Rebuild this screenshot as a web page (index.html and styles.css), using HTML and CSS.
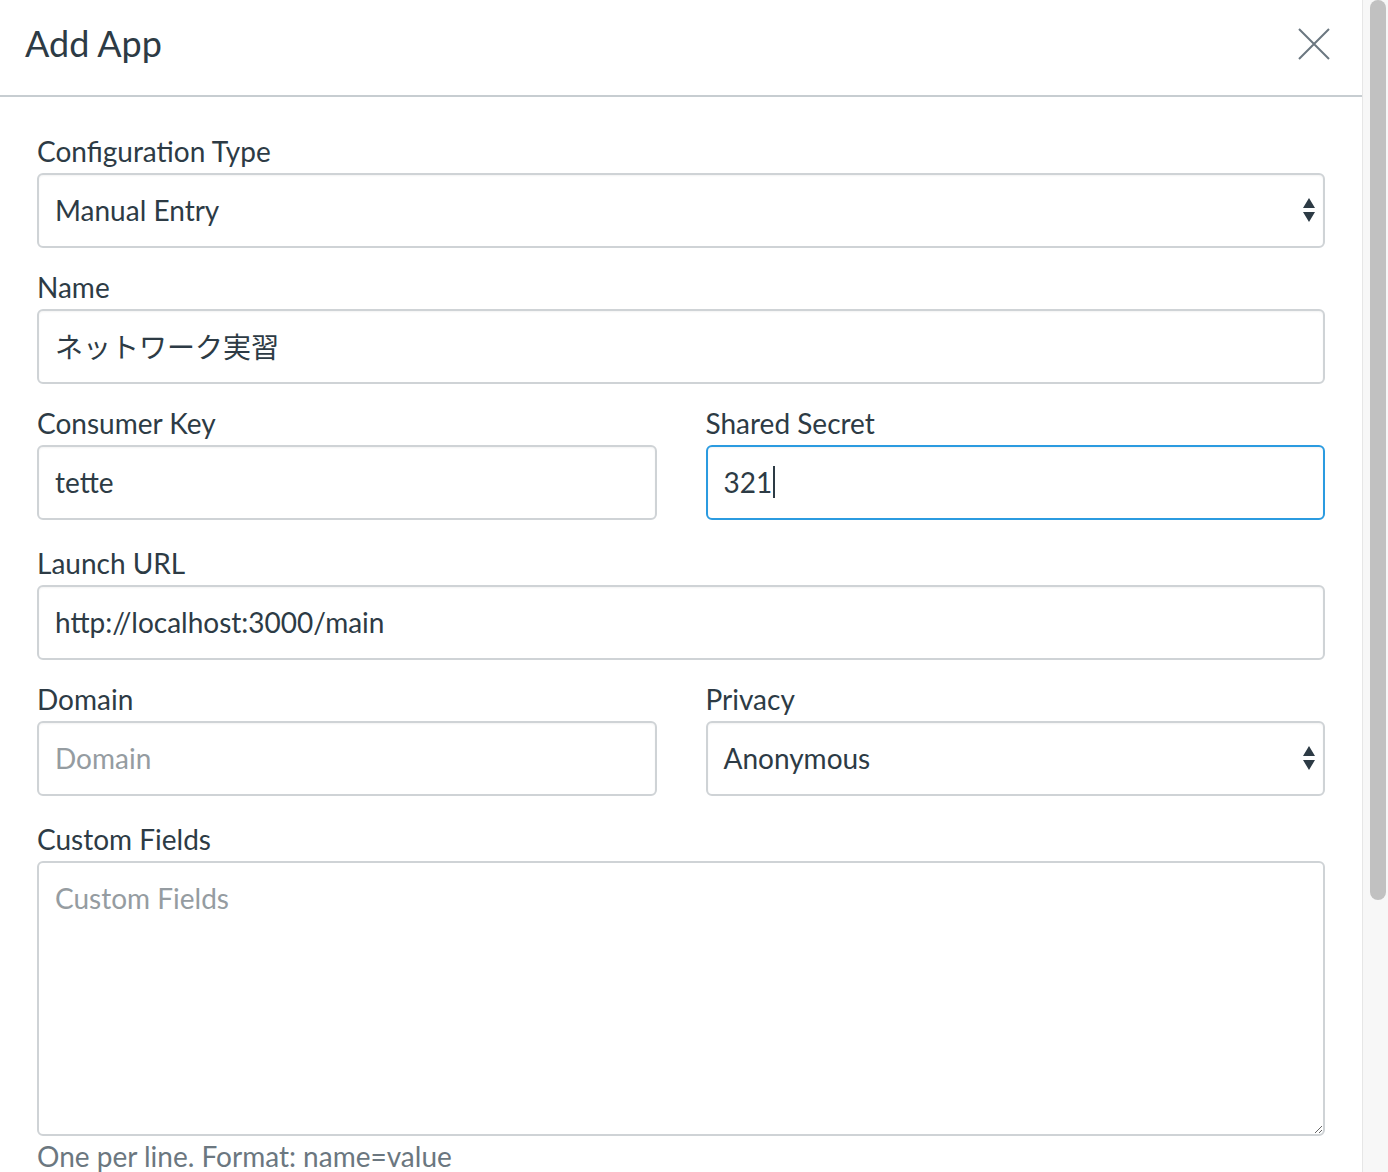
FILE: index.html
```html
<!DOCTYPE html>
<html lang="en">
<head>
<meta charset="utf-8">
<title>Add App</title>
<link rel="stylesheet" href="styles.css">
</head>
<body>
<div class="page">
  <div class="modal">
    <header class="modal-header">
      <h1 class="modal-title">Add App</h1>
      <button class="close" aria-label="Close">
        <svg width="32" height="32" viewBox="0 0 32 32"><path d="M1 1 L31 31 M31 1 L1 31" stroke="#6b7780" stroke-width="2" fill="none"/></svg>
      </button>
    </header>
    <div class="modal-body">
      <div class="field">
        <label class="label">Configuration Type</label>
        <div class="control select">
          <span class="value">Manual Entry</span>
          <svg class="arrows" width="14" height="26" viewBox="0 0 14 26"><path d="M7 1 L13 11 L1 11 Z M1 15 L13 15 L7 25 Z" fill="#2d3b45"/></svg>
        </div>
      </div>
      <div class="field">
        <label class="label">Name</label>
        <div class="control"><span class="value cjk">ネットワーク実習</span></div>
      </div>
      <div class="row">
        <div class="field">
          <label class="label">Consumer Key</label>
          <div class="control"><span class="value">tette</span></div>
        </div>
        <div class="field">
          <label class="label">Shared Secret</label>
          <div class="control focused"><span class="value">321</span><span class="caret"></span></div>
        </div>
      </div>
      <div class="field">
        <label class="label">Launch URL</label>
        <div class="control"><span class="value">http://localhost:3000/main</span></div>
      </div>
      <div class="row">
        <div class="field">
          <label class="label">Domain</label>
          <div class="control"><span class="value placeholder">Domain</span></div>
        </div>
        <div class="field">
          <label class="label">Privacy</label>
          <div class="control select">
            <span class="value">Anonymous</span>
            <svg class="arrows" width="14" height="26" viewBox="0 0 14 26"><path d="M7 1 L13 11 L1 11 Z M1 15 L13 15 L7 25 Z" fill="#2d3b45"/></svg>
          </div>
        </div>
      </div>
      <div class="field last">
        <label class="label">Custom Fields</label>
        <textarea class="textarea" placeholder="Custom Fields"></textarea>
        <p class="help">One per line. Format: name=value</p>
      </div>
    </div>
  </div>
  <div class="scrollbar"><div class="thumb"></div></div>
</div>
</body>
</html>
```
FILE: styles.css
```css
* { box-sizing: border-box; }
html, body { margin: 0; padding: 0; height: 100%; overflow: hidden; background: #fff; }
body { font-family: Lato, "Noto Sans CJK JP", sans-serif; color: #2d3b45; }
.page { display: flex; height: 1172px; }
.modal { flex: 1; min-width: 0; }
.modal-header {
  height: 97px;
  border-bottom: 2px solid #c7cdd1;
  display: flex; align-items: center; justify-content: space-between;
  padding: 0 32px 0 25px;
}
.modal-title { margin: 0; font-weight: 400; font-size: 36px; line-height: 1; position: relative; top: -5px; }
.close { background: none; border: 0; padding: 0; width: 32px; height: 32px; display: flex; position: relative; top: -4px; }
.modal-body { padding: 38px 37px 0 37px; }
.field { margin-bottom: 23px; display: flex; flex-direction: column; }
.row .field { margin-bottom: 27px; }
.label { font-size: 28px; line-height: 34px; margin-bottom: 4px; position: relative; top: -1px; }
.row { display: grid; grid-template-columns: 1fr 1fr; column-gap: 49px; }
.control {
  height: 75px; border: 2px solid #cfd3d6; border-radius: 6px;
  display: flex; align-items: center; padding: 0 16px 1px;
  font-size: 28px;
  box-shadow: inset 0 1px 2px rgba(0,0,0,0.05);
}
.control.focused { border-color: #2b9be0; }
.value { white-space: nowrap; }
.cjk { font-size: 28px; }
.placeholder { color: #959ca1; }
.caret { display: inline-block; width: 2px; height: 32px; background: #2d3b45; margin-left: 1px; }
.select { justify-content: space-between; padding-right: 7px; }
.textarea {
  height: 275px; border: 2px solid #cfd3d6; border-radius: 6px; resize: vertical;
  font-family: Lato, sans-serif; font-size: 28px; color: #2d3b45;
  padding: 18px 16px; width: 100%; display: block;
}
.textarea::placeholder { color: #959ca1; }
.help { margin: 3px 0 0; font-size: 28px; line-height: 34px; color: #6b7780; }
.scrollbar { width: 26px; background: #f7f7f7; border-left: 1px solid #e6e6e6; padding: 0 2px 0 7px; }
.thumb { height: 900px; background: #c1c1c1; border-radius: 8px; }
```
